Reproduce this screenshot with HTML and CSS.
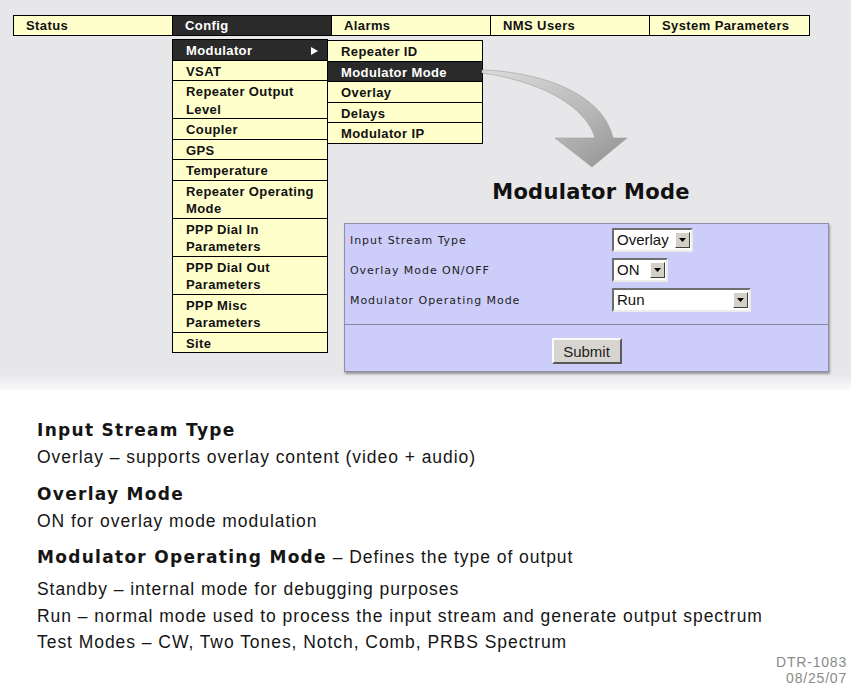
FILE: index.html
```html
<!DOCTYPE html>
<html>
<head>
<meta charset="utf-8">
<title>Modulator Mode</title>
<link rel="stylesheet" href="styles.css">
</head>
<body>
<div class="screen">
  <div class="nav">
    <div class="nav-item">Status</div>
    <div class="nav-item active">Config</div>
    <div class="nav-item">Alarms</div>
    <div class="nav-item">NMS Users</div>
    <div class="nav-item">System Parameters</div>
  </div>

  <ul class="menu menu-main">
    <li class="active">Modulator<svg class="caret" width="9" height="8" viewBox="0 0 9 8"><path d="M1 0L8 4L1 8Z" fill="#fff"/></svg></li>
    <li>VSAT</li>
    <li>Repeater Output<br>Level</li>
    <li>Coupler</li>
    <li>GPS</li>
    <li>Temperature</li>
    <li>Repeater Operating<br>Mode</li>
    <li>PPP Dial In<br>Parameters</li>
    <li>PPP Dial Out<br>Parameters</li>
    <li>PPP Misc<br>Parameters</li>
    <li>Site</li>
  </ul>

  <ul class="menu menu-sub">
    <li>Repeater ID</li>
    <li class="active">Modulator Mode</li>
    <li>Overlay</li>
    <li>Delays</li>
    <li>Modulator IP</li>
  </ul>

  <svg class="arrow" width="160" height="110" viewBox="475 64 160 110">
    <defs>
      <linearGradient id="ag" x1="0" y1="0" x2="1" y2="1">
        <stop offset="0" stop-color="#dcdcdc"/>
        <stop offset="0.6" stop-color="#b6b6b6"/>
        <stop offset="1" stop-color="#909090"/>
      </linearGradient>
    </defs>
    <path d="M482 70C546 72 604 96 613 138L627 138L592 167L555 138L595 138C586 106 540 81 482 73Z" fill="url(#ag)" stroke="#a0a0a0" stroke-width="0.6"/>
  </svg>

  <div class="content">
    <h1 class="title">Modulator Mode</h1>
    <form class="panel">
      <div class="fields">
        <div class="label">Input Stream Type</div>
        <div class="select w-overlay"><span class="val">Overlay</span><span class="btn"><svg width="7" height="4" viewBox="0 0 7 4"><path d="M0 0H7L3.5 4Z" fill="#000"/></svg></span></div>
        <div class="label">Overlay Mode ON/OFF</div>
        <div class="select w-on"><span class="val">ON</span><span class="btn"><svg width="7" height="4" viewBox="0 0 7 4"><path d="M0 0H7L3.5 4Z" fill="#000"/></svg></span></div>
        <div class="label">Modulator Operating Mode</div>
        <div class="select w-run"><span class="val">Run</span><span class="btn"><svg width="7" height="4" viewBox="0 0 7 4"><path d="M0 0H7L3.5 4Z" fill="#000"/></svg></span></div>
      </div>
      <div class="actions">
        <button type="button" class="submit">Submit</button>
      </div>
    </form>
  </div>
</div>

<div class="notes">
  <div class="note">
    <h2 class="note-title">Input Stream Type</h2>
    <p class="note-line">Overlay – supports overlay content (video + audio)</p>
  </div>
  <div class="note">
    <h2 class="note-title">Overlay Mode</h2>
    <p class="note-line">ON for overlay mode modulation</p>
  </div>
  <div class="note">
    <h2 class="note-title">Modulator Operating Mode<span class="note-sub"> – Defines the type of output</span></h2>
    <div class="note-list">
      <p class="note-line">Standby – internal mode for debugging purposes</p>
      <p class="note-line">Run – normal mode used to process the input stream and generate output spectrum</p>
      <p class="note-line">Test Modes – CW, Two Tones, Notch, Comb, PRBS Spectrum</p>
    </div>
  </div>
</div>

<div class="stamp">DTR-1083<br>08/25/07</div>
</body>
</html>
```

FILE: styles.css
```css
* {
  box-sizing: border-box;
  margin: 0;
  padding: 0;
}

body {
  width: 851px;
  height: 693px;
  overflow: hidden;
  background: #fff;
  font-family: "Liberation Sans", Arial, sans-serif;
  color: #111;
}

.screen {
  position: relative;
  height: 390px;
  padding: 15px 0 0 13px;
  background: linear-gradient(to bottom, #e7e6e9 0, #e7e6e9 374px, #fafafb 390px);
}

/* top navigation */
.nav {
  display: grid;
  grid-template-columns: repeat(5, 1fr);
  width: 797px;
  height: 21px;
  border: 1px solid #000;
  background: #ffffcc;
}

.nav-item {
  border-right: 1px solid #000;
  padding-left: 12px;
  font-size: 13px;
  font-weight: bold;
  letter-spacing: 0.4px;
  line-height: 19px;
  color: #111;
  white-space: nowrap;
}

.nav-item:last-child {
  border-right: 0;
}

.nav-item.active {
  background: #2a2a2a;
  color: #fff;
}

/* dropdown menus */
.menu {
  position: absolute;
  list-style: none;
  width: 156px;
  border: 1px solid #000;
  border-bottom: 0;
  background: #ffffcc;
}

.menu li {
  position: relative;
  border-bottom: 1px solid #000;
  padding: 2px 8px 0 13px;
  font-size: 13px;
  font-weight: bold;
  letter-spacing: 0.4px;
  line-height: 17.5px;
  color: #111;
  white-space: nowrap;
}

.menu li.active {
  background: #2a2a2a;
  color: #fff;
}

.menu-main {
  left: 172px;
  top: 39px;
}

.menu-sub {
  left: 327px;
  top: 40px;
}

.caret {
  position: absolute;
  right: 8px;
  top: 7px;
}

.arrow {
  position: absolute;
  left: 475px;
  top: 64px;
}

/* content */
.content {
  width: 485px;
  margin: 144px 0 0 331px;
}

.title {
  font-family: "DejaVu Sans", Verdana, sans-serif;
  font-size: 21px;
  font-weight: bold;
  letter-spacing: 0.3px;
  line-height: 25px;
  text-align: center;
  padding-left: 9px;
  margin-bottom: 18px;
  color: #111;
}

.panel {
  height: 149px;
  border: 1px solid #8e8ea6;
  background: #cdcdf9;
  box-shadow: 1px 2px 2px rgba(0, 0, 0, 0.35);
}

.fields {
  display: grid;
  grid-template-columns: 262px auto;
  row-gap: 6px;
  align-items: center;
  padding: 4px 0 12px 5px;
}

.label {
  font-family: "DejaVu Sans", Verdana, sans-serif;
  font-size: 11px;
  letter-spacing: 0.95px;
  color: #1e1e1e;
}

.select {
  display: flex;
  align-items: center;
  height: 24px;
  background: #fff;
  border: 2px solid;
  border-color: #6e6e6e #ececec #ececec #6e6e6e;
}

.w-overlay { width: 81px; }
.w-on { width: 56px; }
.w-run { width: 139px; }

.select .val {
  flex: 1;
  padding-left: 3px;
  font-size: 15px;
  line-height: 20px;
  color: #111;
}

.select .btn {
  display: flex;
  align-items: center;
  justify-content: center;
  width: 15px;
  height: 16px;
  margin-right: 1px;
  background: #d4d0c8;
  border: 1px solid;
  border-color: #fff #404040 #404040 #fff;
}

.actions {
  display: flex;
  justify-content: center;
  border-top: 1px solid #8a8aa2;
  padding-top: 13px;
}

.submit {
  width: 70px;
  height: 26px;
  font-family: "Liberation Sans", Arial, sans-serif;
  font-size: 15px;
  color: #222;
  background: #d8d5d0;
  border: 2px solid;
  border-color: #fafafa #5a5a5a #5a5a5a #fafafa;
}

/* notes */
.notes {
  padding: 26px 0 0 37px;
  color: #151515;
}

.note + .note {
  margin-top: 8.5px;
}

.note-title {
  font-family: "DejaVu Sans", Verdana, sans-serif;
  font-size: 17px;
  font-weight: bold;
  letter-spacing: 1.3px;
  line-height: 28px;
  white-space: nowrap;
}

.note-sub {
  font-family: "Liberation Sans", Arial, sans-serif;
  font-size: 17.5px;
  font-weight: normal;
  letter-spacing: 0.95px;
}

.note-line {
  font-size: 17.5px;
  letter-spacing: 0.95px;
  line-height: 27px;
  white-space: nowrap;
}

.note-list {
  margin-top: 5px;
}

.note-list .note-line {
  line-height: 26.5px;
}

.stamp {
  margin-top: -2px;
  padding-right: 4px;
  text-align: right;
  font-size: 14px;
  letter-spacing: 0.8px;
  line-height: 16px;
  color: #8a8a8a;
}
```
